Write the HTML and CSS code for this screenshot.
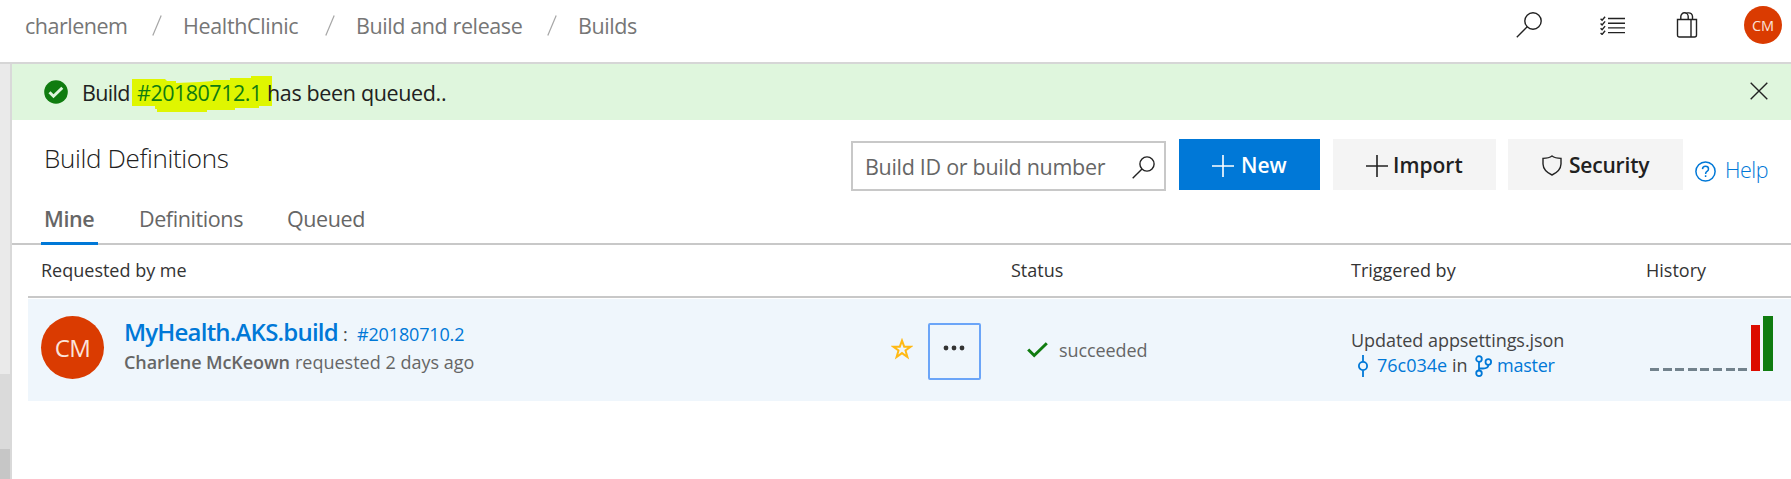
FILE: index.html
```
<!DOCTYPE html>
<html lang="en">
<head>
<meta charset="utf-8">
<title>Build Definitions</title>
<link rel="stylesheet" href="styles.css">
</head>
<body>
<header class="topbar">
  <nav class="crumbs">
    <a class="crumb c1">charlenem</a><svg class="slash" viewBox="0 0 10 21"><path d="M9.2 .5 .8 20.5"/></svg>
    <a class="crumb c2">HealthClinic</a><svg class="slash" viewBox="0 0 10 21"><path d="M9.2 .5 .8 20.5"/></svg>
    <a class="crumb c3">Build and release</a><svg class="slash" viewBox="0 0 10 21"><path d="M9.2 .5 .8 20.5"/></svg>
    <a class="crumb c4">Builds</a>
  </nav>
  <div class="tools">
    <svg class="t-search line" viewBox="0 0 26 26"><circle cx="17" cy="9" r="8.2"/><path d="M11.2 14.8 .8 25.2"/></svg>
    <svg class="t-list line" viewBox="0 0 25 19"><path d="M8 2.5h17M8 7.2h17M8 11.900h17M8 16.600h17"/><path d="M.6 2.800l1.500 1.500 3-3.600M.6 7.500l1.500 1.500 3-3.600M.6 12.200l1.500 1.500 3-3.600M.6 16.900l1.500 1.500 3-3.600"/></svg>
    <svg class="t-bag line" viewBox="0 0 22 26"><path d="M1.500 7.500h19v15.500q0 2-2 2h-15q-2 0-2-2zM15 7.500V25M4.800 7.500V4.500a3.700 3.700 0 0 1 7.400 0V7.500M9.500 1.200q1.500-.4 3-.3a3.700 3.700 0 0 1 4 3.600V7.500"/></svg>
    <span class="avatar small">CM</span>
  </div>
</header>
<div class="shell">
  <aside class="rail"><i class="track"></i><i class="thumb"></i><i class="arrow"></i></aside>
  <main class="main">
    <div class="notice">
      <svg class="ok" viewBox="0 0 24 24"><circle cx="12" cy="12" r="11.800" fill="#107c10"/><path d="M5.500 12.300l4 4 8.800-8.600" fill="none" stroke="#dff6dd" stroke-width="2.900"/></svg>
      <span class="n1">Build</span>
      <span class="marked"><svg class="ink" viewBox="0 0 140 36"><path d="M0 3H33L35 5H44V7L68 6 81 5V4H98V2H119V0H140V30H127V32H103V34H75V36H25V33H23V30H0Z" fill="#dff600"/></svg><a class="n2">#20180712.1</a></span>
      <span class="n3">has been queued..</span>
      <svg class="close line" viewBox="0 0 18 18"><path d="M.7 .7 17.300 17.300M17.300 .7 .7 17.300"/></svg>
    </div>
    <div class="head">
      <h1 class="title">Build Definitions</h1>
      <div class="search"><span class="ph">Build ID or build number</span><svg class="s-icon line" viewBox="0 0 23 23"><circle cx="15" cy="8" r="7.100"/><path d="M10 13 .7 22.300"/></svg></div>
      <button class="btn primary"><svg class="plus" viewBox="0 0 22 22"><path d="M11 0V22M0 11H22"/></svg><span class="b1">New</span></button>
      <button class="btn"><svg class="plus" viewBox="0 0 22 22"><path d="M11 0V22M0 11H22"/></svg><span class="b2">Import</span></button>
      <button class="btn"><svg class="shield line" viewBox="0 0 20 21"><path d="M10 1Q7 3.300 1 3.400V9Q1.300 16 10 20 18.700 16 19 9V3.400Q13 3.300 10 1Z"/></svg><span class="b3">Security</span></button>
      <a class="help"><svg class="q" viewBox="0 0 21 21"><circle cx="10.500" cy="10.500" r="9.600"/><path d="M7.500 8.100Q7.600 5.200 10.500 5.200 13.500 5.200 13.500 7.900 13.500 9.400 12 10.400 10.600 11.300 10.600 13M10.600 14.300V16"/></svg><span class="b4">Help</span></a>
    </div>
    <div class="tabs"><a class="tab active">Mine</a><a class="tab t2">Definitions</a><a class="tab t3">Queued</a></div>
    <section class="table">
      <div class="row th"><span class="h1">Requested by me</span><span></span><span class="h2">Status</span><span class="h3">Triggered by</span><span class="h4">History</span></div>
      <div class="row td">
        <div class="who">
          <span class="avatar big">CM</span>
          <div class="def">
            <div class="l1"><a class="name">MyHealth.AKS.build</a><span class="colon">:</span><a class="num">#20180710.2</a></div>
            <div class="l2"><b class="person">Charlene McKeown</b><span class="ago">requested 2 days ago</span></div>
          </div>
        </div>
        <div class="acts">
          <svg class="star" viewBox="0 0 22 22"><path d="M11 2.600 13.200 8.700H19.600L14.500 12.500 16.400 19 11 15.100 5.600 19 7.500 12.500 2.400 8.700H8.800Z"/></svg>
          <button class="more"><svg class="dots" viewBox="0 0 22 6"><circle cx="3" cy="3" r="2.400"/><circle cx="11" cy="3" r="2.400"/><circle cx="19" cy="3" r="2.400"/></svg></button>
        </div>
        <div class="status"><svg class="check" viewBox="0 0 21 16"><path d="M1.200 7.500 7.200 13.500 19.800 1.200"/></svg><span class="st">succeeded</span></div>
        <div class="trig">
          <div class="msg">Updated appsettings.json</div>
          <div class="src"><svg class="commit" viewBox="0 0 10 22"><path d="M5 0V6.500M5 15.500V22"/><circle cx="5" cy="11" r="4.100"/></svg><a class="hash">76c034e</a><span class="in">in</span><svg class="branch" viewBox="0 0 17 22"><circle cx="4" cy="4" r="2.800"/><circle cx="4" cy="18.300" r="2.800"/><circle cx="13.300" cy="7" r="2.800"/><path d="M4 7V15.300M4 13.500H8Q13.300 13.500 13.300 10"/></svg><a class="br">master</a></div>
        </div>
        <div class="hist"><i></i><i></i><i></i><i></i><i></i><i></i><i></i><i></i><i class="bad"></i><i class="good"></i></div>
      </div>
    </section>
  </main>
</div>
</body>
</html>
```
FILE: styles.css
```
* { box-sizing: border-box; }
body { margin: 0; width: 1791px; height: 479px; overflow: hidden; background: #fff; color: #212121; font-family: "Open Sans", "Noto Sans", sans-serif; font-size: 21.5px; line-height: 30px; font-weight: 370; white-space: nowrap; }
svg { display: block; flex: none; }
span, a, b { flex: none; }
.line { fill: none; stroke: #222; stroke-width: 1.4; }
.topbar { display: flex; justify-content: space-between; height: 64px; border-bottom: 2px solid #d6d6d6; }
.crumbs { display: flex; padding: 11px 0 0 25px; color: #767676; }
.crumb { display: block; height: 30px; }
.slash { width: 10px; height: 21px; margin-top: 4px; fill: none; stroke: #a6a6a6; stroke-width: 1.2; }
.c1 { width: 127px; letter-spacing: -.5px; }
.c2 { width: 142px; margin-left: 21px; letter-spacing: -.35px; }
.c3 { width: 191px; margin-left: 21px; letter-spacing: -.4px; }
.c4 { margin-left: 21px; letter-spacing: -.4px; }
.tools { display: flex; padding-right: 9px; }
.t-search { width: 26px; height: 26px; margin: 12px 58px 0 0; }
.t-list { width: 25px; height: 19px; margin: 16px 51px 0 0; }
.t-bag { width: 22px; height: 26px; margin: 12px 46px 0 0; }
.avatar { display: block; flex: none; border-radius: 50%; background: #da3b01; color: #fbe3da; text-align: center; }
.small { width: 38px; height: 38px; margin-top: 6px; font-size: 14.5px; line-height: 39px; }
.shell { display: flex; height: 415px; }
.rail { width: 12px; background: #eaeaea; border-right: 2px solid #d9d9d9; display: flex; flex-direction: column; }
.rail i { display: block; }
.track { height: 310px; }
.thumb { height: 75px; background: #dadada; }
.arrow { height: 30px; background: #c6c6c6; }
.main { width: 1779px; }
.notice { display: flex; height: 56px; background: #dff6dd; padding: 14px 23px 0 32px; }
.ok { width: 24px; height: 24px; margin-top: 2px; }
.n1 { width: 50px; margin-left: 14px; letter-spacing: -.7px; }
.marked { position: relative; width: 140px; height: 30px; padding-left: 5px; }
.ink { position: absolute; left: 0; top: -2px; width: 140px; height: 36px; }
.n2 { position: relative; color: #107c10; letter-spacing: -.5px; }
.n3 { margin-left: -5px; position: relative; letter-spacing: -.35px; }
.close { width: 18px; height: 18px; margin: 4px 0 0 auto; }
.head { display: flex; height: 82px; padding-top: 19px; }
.title { width: 806px; margin: 0; padding-left: 32px; font-size: 26px; line-height: 38px; font-weight: 340; letter-spacing: -.35px; color: #212121; }
.search { display: flex; width: 315px; height: 50px; margin: 2px 13px 0 33px; border: 2px solid #c8c8c8; padding: 9px 9px 0 12px; justify-content: space-between; color: #666; }
.ph { letter-spacing: -.3px; }
.s-icon { width: 23px; height: 23px; margin-top: 4px; }
.btn { display: flex; height: 51px; border: 0; background: #f4f4f4; color: #212121; font: 600 21px/30px "Open Sans", sans-serif; padding: 9px 33px 0; margin-right: 12px; width: 163px; }
.btn span { padding-top: 2px; }
.primary { background: #0078d7; color: #fff; width: 141px; margin-right: 13px; }
.plus { width: 22px; height: 22px; margin: 7px 7px 0 0; fill: none; stroke: currentColor; stroke-width: 1.6; }
.b2 { margin-left: -2px; }
.b3 { letter-spacing: -.2px; }
.shield { width: 20px; height: 21px; margin: 7px 7px 0 1px; }
.btn:nth-of-type(3) { width: 175px; }
.help { display: flex; color: #0078d7; font-weight: 300; padding-top: 14px; }
.b4 { padding-top: 2px; letter-spacing: -.5px; }
.q { width: 21px; height: 21px; margin: 8px 9px 0 0; fill: none; stroke: #0078d7; stroke-width: 1.5; }
.tabs { display: flex; height: 43px; border-bottom: 2px solid #c8c8c8; padding-left: 29px; color: #666; }
.tab { display: block; height: 43px; padding-top: 2px; letter-spacing: -.4px; }
.active { width: 57px; padding-left: 3px; border-bottom: 3px solid #0078d7; font-weight: 600; }
.t2 { width: 148px; margin-left: 41px; }
.table { padding-left: 16px; font-size: 18px; line-height: 26px; }
.row { display: grid; grid-template-columns: 863px 120px 341px 295px 144px; }
.th { height: 53px; border-bottom: 2px solid #c8c8c8; padding-top: 12px; color: #333; }
.h1 { padding-left: 13px; }
.h3, .h4 { margin-left: -1px; }
.td { height: 102px; margin-top: 1px; background: #eff6fc; color: #444; }
.who { display: flex; padding: 17px 0 0 13px; }
.big { width: 63px; height: 63px; font-size: 24px; line-height: 64px; letter-spacing: -.5px; }
.def { margin-left: 20px; }
.l1 { display: flex; align-items: baseline; height: 32px; }
.name { width: 219px; color: #0078d7; font-size: 24px; line-height: 32px; font-weight: 600; letter-spacing: -.8px; }
.colon { width: 14px; }
.num { color: #0078d7; letter-spacing: -.15px; }
.l2 { display: flex; color: #666; margin-top: 1px; }
.person { width: 171px; font-weight: 600; letter-spacing: -.1px; }
.acts { display: flex; }
.star { width: 22px; height: 22px; margin: 39px 15px 0 0; fill: none; stroke: #ffb914; stroke-width: 2; }
.more { width: 53px; height: 57px; margin-top: 24px; padding: 0; background: none; border: 2px solid #6ba5f8; border-radius: 2px; }
.dots { width: 22px; height: 6px; margin: -7px 0 0 13px; fill: #333; }
.status { display: flex; padding-left: 16px; color: #666; }
.check { width: 21px; height: 16px; margin: 43px 11px 0 0; fill: none; stroke: #107c10; stroke-width: 3; }
.st { margin-top: 38px; letter-spacing: -.1px; }
.msg { margin: 28px 0 0 -1px; letter-spacing: -.05px; }
.src { display: flex; color: #444; margin-top: -1px; }
.commit { width: 10px; height: 22px; margin: 3px 9px 0 6px; fill: none; stroke: #0078d7; stroke-width: 1.8; }
.hash { width: 75px; color: #0078d7; }
.in { width: 23px; }
.branch { width: 17px; height: 22px; margin: 3px 5px 0 0; fill: none; stroke: #0078d7; stroke-width: 1.8; }
.br { color: #0078d7; letter-spacing: -.25px; }
.hist { display: flex; align-items: flex-end; gap: 3.600px; height: 72px; padding-left: 3px; }
.hist i { flex: none; width: 9px; height: 3px; background: #72828c; }
.hist .bad { height: 46px; background: #dc0c00; }
.hist .good { width: 10px; height: 55px; background: #107c10; margin-left: -.6px; }
```
